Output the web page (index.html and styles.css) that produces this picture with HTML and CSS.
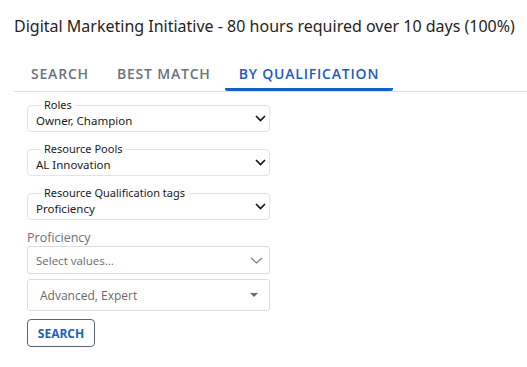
FILE: index.html
```html
<!DOCTYPE html>
<html lang="en">
<head>
  <meta charset="UTF-8">
  <title>By Qualification</title>
  <link rel="stylesheet" href="styles.css">
</head>
<body>
  <div class="panel">
    <h1 class="title">Digital Marketing Initiative - 80 hours required over 10 days (100%)</h1>

    <div class="tabs">
      <div class="tab">SEARCH</div>
      <div class="tab">BEST MATCH</div>
      <div class="tab active">BY QUALIFICATION</div>
    </div>

    <div class="form">
      <div class="field">
        <span class="field-label">Roles</span>
        <span class="value">Owner, Champion</span>
        <svg class="chev" width="11" height="7" viewBox="0 0 11 7"><path d="M1 1l4.5 4.5L10 1" fill="none" stroke="#111" stroke-width="1.6"/></svg>
      </div>

      <div class="field">
        <span class="field-label">Resource Pools</span>
        <span class="value">AL Innovation</span>
        <svg class="chev" width="11" height="7" viewBox="0 0 11 7"><path d="M1 1l4.5 4.5L10 1" fill="none" stroke="#111" stroke-width="1.6"/></svg>
      </div>

      <div class="field">
        <span class="field-label">Resource Qualification tags</span>
        <span class="value">Proficiency</span>
        <svg class="chev" width="11" height="7" viewBox="0 0 11 7"><path d="M1 1l4.5 4.5L10 1" fill="none" stroke="#111" stroke-width="1.6"/></svg>
      </div>

      <label class="label">Proficiency</label>
      <div class="select">
        <span>Select values...</span>
        <svg width="13" height="7" viewBox="0 0 13 7"><path d="M1 1l5.5 5L12 1" fill="none" stroke="#7a7a7a" stroke-width="1.2"/></svg>
      </div>
      <div class="select tall">
        <span>Advanced, Expert</span>
        <svg width="8" height="4" viewBox="0 0 8 4"><path d="M0 0h8L4 4z" fill="#6b6b6b"/></svg>
      </div>

      <button class="search-btn">SEARCH</button>
    </div>
  </div>
</body>
</html>
```

FILE: styles.css
```css
body {
  margin: 0;
  background: #fff;
  font-family: "Noto Sans", "Open Sans", sans-serif;
  color: #323130;
}

.panel {
  padding: 14px 0 0 14px;
}

.title {
  margin: 0;
  font-size: 16px;
  font-weight: 400;
  line-height: 24px;
  color: #252423;
}

.tabs {
  display: flex;
  margin-top: 26px;
  padding-left: 3px;
  border-bottom: 1px solid #e1e1e1;
}

.tab {
  padding: 0 14px 4px;
  font-family: "Open Sans", sans-serif;
  font-size: 14px;
  font-weight: 600;
  letter-spacing: 0.8px;
  line-height: 20px;
  color: #6b737c;
  border-bottom: 3px solid transparent;
}

.tab.active {
  color: #1b5cc0;
  border-bottom-color: #1560c8;
  border-radius: 2px;
}

.form {
  width: 243px;
  padding: 13px 0 0 13px;
}

.field {
  position: relative;
  display: flex;
  align-items: center;
  justify-content: space-between;
  height: 27px;
  margin-bottom: 17px;
  padding: 4px 3px 0 8px;
  box-sizing: border-box;
  border: 1px solid #e3e3e3;
  border-radius: 4px;
}

.field-label {
  position: absolute;
  top: -8px;
  left: 13px;
  padding: 0 3px;
  background: #fff;
  font-size: 11px;
  line-height: 14px;
  color: #1b1b1b;
}

.value {
  font-size: 11.5px;
  line-height: 16px;
  color: #1b1b1b;
}

.chev {
  margin-top: -4px;
}

.field + .label {
  margin-top: -7px;
}

.label {
  display: block;
  font-family: "Open Sans", sans-serif;
  font-size: 12.5px;
  line-height: 16px;
  color: #707070;
}

.select {
  display: flex;
  align-items: center;
  justify-content: space-between;
  height: 28px;
  padding: 0 6px 0 8px;
  box-sizing: border-box;
  border: 1px solid #dcdcdc;
  border-radius: 3px;
  font-family: "Open Sans", sans-serif;
  font-size: 11.5px;
  color: #6a6a6a;
}

.select.tall {
  height: 32px;
  margin-top: 5px;
  padding: 0 11px 0 12px;
  font-size: 12px;
}

.search-btn {
  margin-top: 8px;
  height: 28px;
  width: 68px;
  padding: 0;
  background: #fff;
  border: 1px solid #5c6570;
  border-radius: 4px;
  font-family: "Open Sans", sans-serif;
  font-size: 12px;
  font-weight: 700;
  color: #1a5fb8;
}
```
